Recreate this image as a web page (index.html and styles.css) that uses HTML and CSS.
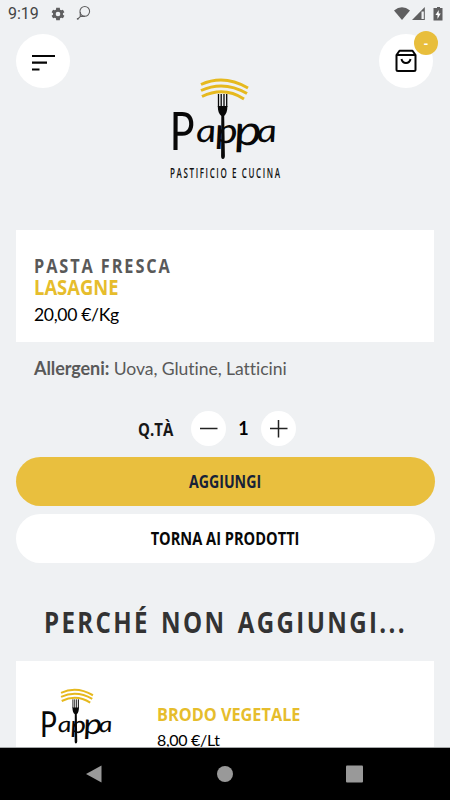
FILE: index.html
```html
<!DOCTYPE html>
<html lang="it">
<head>
<meta charset="utf-8">
<meta name="viewport" content="width=device-width, initial-scale=1">
<title>Pappa</title>
<link rel="stylesheet" href="styles.css">
</head>
<body>
<svg width="0" height="0" class="defs">
  <symbol id="logo-mark" viewBox="0 0 112 88" overflow="visible">
    <g fill="none" stroke="#e6b91e" stroke-width="3">
      <path d="M31 5.500Q54-5 78 9"/>
      <path d="M31 11.500Q54 1 77 14.500"/>
      <path d="M32 17.500Q54 7 74 20"/>
    </g>
    <g fill="none" stroke="#080808" stroke-width="1.300">
      <path d="M48.500 15v13M51.200 15v15M54 15v15M56.700 15v13"/>
    </g>
    <path d="M47.800 27h9.600c0 5-1.200 8-3.200 10l.7 40q-.2 3-2 3t-1.800-3l.2-40c-2.300-2-3.500-5-3.500-10z" fill="#080808"/>
    <text class="script" transform="matrix(1.250 0 .1 1 -7 0)" x="1" y="71" font-size="53" textLength="80"><tspan x="1" font-size="53" textLength="20" lengthAdjust="spacingAndGlyphs">P</tspan><tspan x="22" y="63.500" font-size="32">a</tspan><tspan x="37" y="64" font-size="35">p</tspan><tspan x="52.500" y="66" font-size="42">p</tspan><tspan x="70.500" y="63.500" font-size="32">a</tspan></text>
  </symbol>
</svg>
<div class="screen">
  <header class="status">
    <span class="clock">9:19</span>
    <svg class="gear" viewBox="0 0 24 24"><path fill="#5f5f60" fill-rule="evenodd" d="M19.400 13a7.500 7.500 0 0 0 0-2l2.200-1.700-2.200-3.800-2.600 1a7 7 0 0 0-1.700-1L14.700 2.500H9.300l-.4 3a7 7 0 0 0-1.700 1l-2.600-1-2.200 3.800L4.600 11a7.500 7.500 0 0 0 0 2l-2.200 1.700 2.200 3.800 2.600-1a7 7 0 0 0 1.700 1l.4 3h5.400l.4-3a7 7 0 0 0 1.700-1l2.600 1 2.200-3.800zM12 8.500a3.500 3.500 0 1 1 0 7 3.500 3.500 0 0 1 0-7z"/></svg>
    <svg class="racket" viewBox="0 0 14 14"><g fill="none" stroke="#5f5f60"><circle cx="8.200" cy="5" r="4.500"/><path d="M4 5.500v4.200h4.300M4.200 9.700 1.500 12.200" stroke-width="1.100"/></g><circle cx="1.600" cy="12" r=".9" fill="#5f5f60"/></svg>
    <svg class="signals" viewBox="0 0 50 16"><g fill="#5f5f60"><path d="M1 4.500Q9-2 17 4.500L9 14z"/><path d="M19 14 31.800 1v13z"/><path d="M42 2h2V1h3v1h2.500v12.500H40.500V2z"/></g><path d="M28.500 5.500h2.300V13h-2.300z" fill="#eff1f3"/><path d="m45.700 4-3.200 5h2v4l3.200-5.500h-2z" fill="#fff"/></svg>
  </header>
  <nav class="actions">
    <button class="circle"><svg width="54" height="54" viewBox="0 0 54 54"><path d="M16 22h23M16 28.700h15M16 35.500h7.500" stroke="#050505" stroke-width="2.200"/></svg></button>
    <button class="circle">
      <svg width="54" height="54" viewBox="0 0 54 54"><path d="m17.500 21 3-4.300h13L36.500 21M17.500 21h19v14.500q0 1.500-1.500 1.500H19q-1.500 0-1.500-1.500zM22.500 25c1 5.300 8 5.300 9 0" fill="none" stroke="#050505" stroke-width="2" stroke-linejoin="round"/></svg>
      <span class="badge">-</span>
    </button>
  </nav>
  <div class="brand">
    <svg width="112" height="86" viewBox="0 0 112 86" overflow="visible"><use href="#logo-mark" width="112" height="88"/></svg>
    <div class="tagline"><span>PASTIFICIO E CUCINA</span></div>
  </div>
  <section class="product">
    <h2 class="category"><span>PASTA FRESCA</span></h2>
    <h1 class="name"><span>LASAGNE</span></h1>
    <p class="price">20,00 €/Kg</p>
  </section>
  <p class="allergens"><b>Allergeni:</b> Uova, Glutine, Latticini</p>
  <div class="quantity">
    <span class="label"><span>Q.TÀ</span></span>
    <button class="step"><svg width="35" height="35" viewBox="0 0 35 35"><path d="M9 17.500h17.500" stroke="#222" stroke-width="1.500"/></svg></button>
    <span class="count">1</span>
    <button class="step"><svg width="35" height="35" viewBox="0 0 35 35"><path d="M9 17.500h17.500M17.500 9v17.500" stroke="#222" stroke-width="1.500"/></svg></button>
  </div>
  <button class="pill add"><span>AGGIUNGI</span></button>
  <button class="pill back"><span>TORNA AI PRODOTTI</span></button>
  <h2 class="suggest"><span>PERCHÉ NON AGGIUNGI...</span></h2>
  <article class="related">
    <svg width="76" height="60" viewBox="0 0 112 88" overflow="visible"><use href="#logo-mark" width="112" height="88"/></svg>
    <div class="info">
      <h3><span>BRODO VEGETALE</span></h3>
      <p>8,00 €/Lt</p>
    </div>
  </article>
</div>
<footer class="system">
  <svg width="450" height="52" viewBox="0 0 450 52"><g fill="#999"><path d="M101.500 17.500v17L86 26z"/><circle cx="225" cy="26" r="8"/><rect x="346" y="17.500" width="17" height="17" rx="1"/></g></svg>
</footer>
</body>
</html>
```

FILE: styles.css
```css
* { box-sizing: border-box; }
body {
  margin: 0;
  width: 450px;
  height: 800px;
  overflow: hidden;
  display: flex;
  flex-direction: column;
  background: #eff1f3;
  font-family: Lato, sans-serif;
  font-variant-ligatures: none;
}
.defs { position: absolute; }
svg { display: block; flex: none; }
h1, h2, h3, p { margin: 0; }
button { border: 0; padding: 0; font: inherit; }
.screen { height: 748px; flex: none; overflow: hidden; border-bottom: 1px solid #a5a8a9; }
.status { height: 26px; padding: 3px 8px 0; display: flex; align-items: center; }
.clock { font: 400 16px/20px Roboto, sans-serif; width: 42px; color: #444; position: relative; top: -1px; }
.gear { width: 16px; height: 16px; position: relative; top: -1px; }
.racket { width: 15px; height: 15px; margin-left: 10px; position: relative; top: -1px; }
.signals { width: 50px; height: 16px; margin-left: auto; margin-right: -1px; position: relative; top: -1px; }
.actions { display: flex; justify-content: space-between; padding: 8px 17px 0 16px; height: 53px; }
.circle { position: relative; width: 54px; height: 54px; flex: none; border-radius: 50%; background: #fff; }
.badge {
  position: absolute; top: -3px; right: -5px;
  width: 24px; height: 24px; border-radius: 50%;
  background: #e8be3c; color: #fff; font: 900 13px/24px Lato, sans-serif; text-align: center;
}
.brand { width: 112px; height: 151px; margin: 0 auto 0 170px; }
.script { font-family: Lato, sans-serif; font-weight: 400; font-style: italic; fill: #080808; }
.tagline { font: 600 13.5px/16px "Open Sans", sans-serif; color: #111; letter-spacing: 2.7px; }
.product, .related { margin: 0 16px 0 16px; background: #fff; }
.product { height: 112px; padding: 25px 18px 0; }
.tagline span, .category span, .name span, .label span, .pill span, .suggest span, .related h3 span {
  display: inline-block; white-space: nowrap; transform-origin: left;
}
.tagline span { transform: scaleX(.595); }
.category, .name, .label, .pill, .suggest, .related h3 { font-family: "Open Sans", sans-serif; font-weight: 700; }
.category { font-size: 19.5px; line-height: 22px; color: #595959; letter-spacing: 2.3px; }
.category span { transform: scaleX(.835); }
.name { font-size: 21.5px; line-height: 21px; color: #e6bd2c; margin-top: -1px; }
.name span { transform: scaleX(.855); }
.price { font-size: 17.6px; line-height: 22px; margin-top: 7px; letter-spacing: -.35px; }
.allergens { padding: 15px 34px 0; font-size: 17.6px; line-height: 22px; height: 69px; color: #595959; letter-spacing: -.07px; }
.allergens b { font-size: 18px; }
.quantity { display: flex; align-items: center; height: 35px; margin-left: 138px; }
.label { width: 53px; font-size: 18.5px; line-height: 35px; color: #171717; }
.label span { transform: scaleX(.81); }
.step { width: 35px; height: 35px; border-radius: 50%; background: #fff; }
.count { width: 35px; text-align: center; font: 700 18px/35px Lato, sans-serif; }
.pill { display: flex; justify-content: center; align-items: center; width: 419px; height: 49px; margin: 11px 0 0 16px; border-radius: 25px; font-size: 17.3px; padding-bottom: 1px; }
.pill span { transform-origin: center; transform: scaleX(.82); }
.add { background: #e9bf3e; color: #172238; }
.back { background: #fff; color: #080808; margin-top: 8px; }
.back span { transform: scaleX(.845); }
.suggest { margin-top: 39px; padding-left: 44px; font-size: 28.5px; line-height: 40px; height: 59px; color: #333; letter-spacing: 2.8px; word-spacing: 3px; white-space: nowrap; }
.suggest span { transform: scaleX(.845); }
.related { height: 120px; padding: 28px 0 0 24px; display: flex; }
.info { margin-left: 41px; padding-top: 13px; }
.related h3 { font-size: 18.5px; line-height: 24px; color: #e6bd2c; }
.related h3 span { transform: scaleX(.88); }
.related p { font-size: 16px; line-height: 20px; margin-top: 4px; letter-spacing: -.3px; }
.system { height: 52px; background: #000; }
```
